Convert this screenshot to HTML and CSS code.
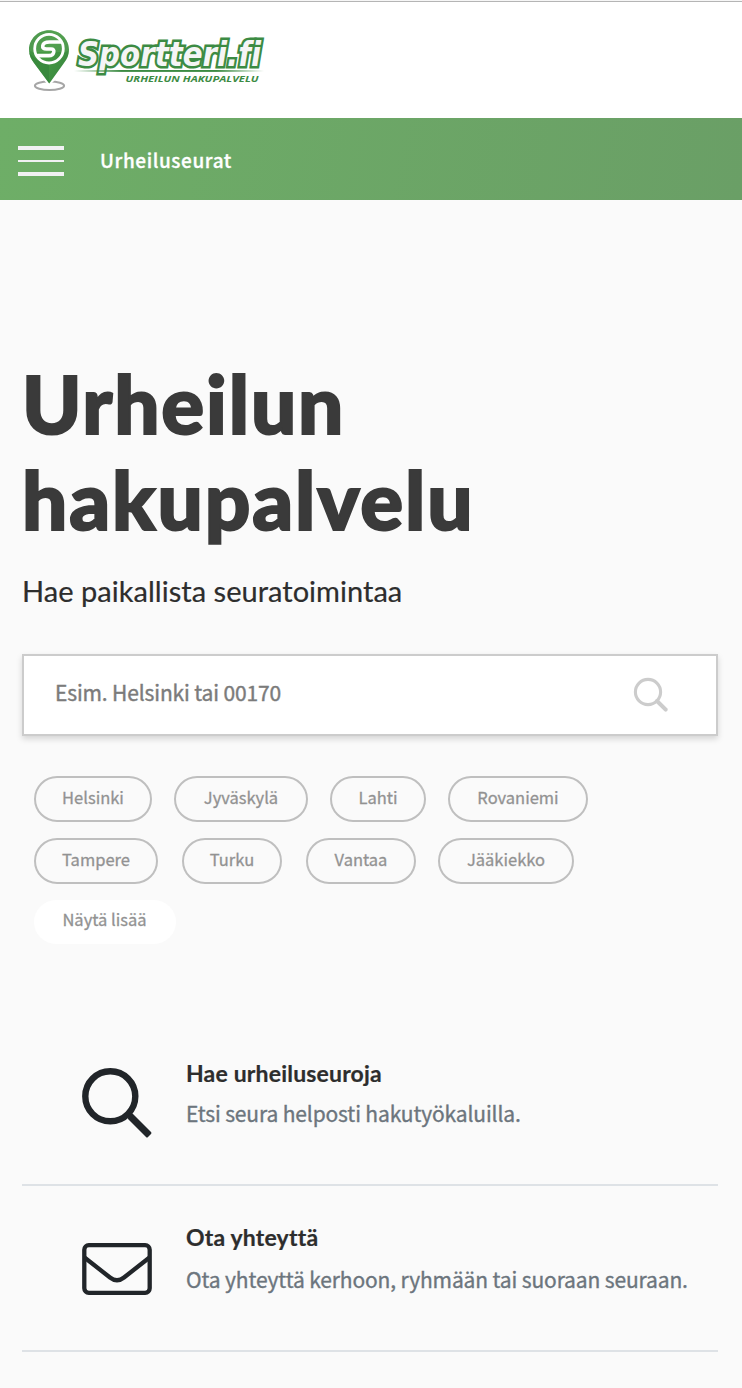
FILE: index.html
```html
<!DOCTYPE html>
<html lang="fi">
<head>
<meta charset="utf-8">
<title>Sportteri.fi</title>
<link rel="stylesheet" href="styles.css">
</head>
<body>
<header class="header">
  <svg class="logo" viewBox="0 0 250 80" role="img" aria-label="Sportteri.fi">
    <defs>
      <linearGradient id="pin" x1="0" y1="0" x2="1" y2="0.7">
        <stop offset="0" stop-color="#3d8a43"/><stop offset="0.5" stop-color="#459b43"/><stop offset="1" stop-color="#3a8740"/>
      </linearGradient>
      <linearGradient id="rule" x1="0" y1="0" x2="1" y2="0">
        <stop offset="0" stop-color="#3c8b43" stop-opacity="0"/><stop offset="0.25" stop-color="#3c8b43"/><stop offset="0.75" stop-color="#3c8b43"/><stop offset="1" stop-color="#3c8b43" stop-opacity="0"/>
      </linearGradient>
    </defs>
    <ellipse cx="29.500" cy="65.800" rx="14.600" ry="4.200" fill="none" stroke="#a6a6a6" stroke-width="2"/>
    <path d="M22 58 29 66 37 58Z" fill="#fff"/>
    <path d="M29 10.300C40 10.300 49 19 49 30C49 35 47 39 44 43L29.300 63.500L14 43C11 39 9 35 9 30C9 19 18 10.300 29 10.300Z" fill="url(#pin)"/>
    <path d="M29 42v21.300L14 43Q10 38 9.200 33L16 39Z" fill="#32803a" opacity=".6"/>
    <path d="M9 31C9 18 18 10.300 29 10.300S49 18 49 31l-4 1H13Z" fill="#7ab873" opacity=".25"/>
    <circle cx="29" cy="28.700" r="14.300" fill="none" stroke="#fff" stroke-width="2.800"/>
    <path d="M42 22H29.500Q23.500 22 22.800 25.500T26.500 29H31Q34.500 29 33.700 32.300T29 35.600H17" fill="none" stroke="#fff" stroke-width="3.600"/>
    <text class="wordmark" x="58" y="46" textLength="183" lengthAdjust="spacingAndGlyphs">Sportteri.fi</text>
    <rect x="54" y="50" width="190" height="1.900" fill="url(#rule)"/>
    <text class="tagline" x="105.500" y="62" textLength="133" lengthAdjust="spacingAndGlyphs">URHEILUN HAKUPALVELU</text>
  </svg>
</header>
<nav class="nav">
  <div class="burger"><span></span><span></span><span></span></div>
  <a class="nav-link">Urheiluseurat</a>
</nav>
<main class="main">
  <h1 class="title">Urheilun<br>hakupalvelu</h1>
  <p class="lead">Hae paikallista seuratoimintaa</p>
  <div class="search">
    <span class="placeholder">Esim. Helsinki tai 00170</span>
    <svg class="search-icon" viewBox="0 0 36 36"><circle cx="15" cy="15" r="12.600" fill="none" stroke="#ccc" stroke-width="3.100"/><path d="M24 24 32.700 32.700" stroke="#ccc" stroke-width="4" stroke-linecap="round"/></svg>
  </div>
  <div class="tags">
    <div class="row"><a class="tag t1">Helsinki</a><a class="tag t2">Jyväskylä</a><a class="tag t3">Lahti</a><a class="tag t4">Rovaniemi</a></div>
    <div class="row wide"><a class="tag t5">Tampere</a><a class="tag t6">Turku</a><a class="tag t7">Vantaa</a><a class="tag t8">Jääkiekko</a></div>
    <div class="row"><a class="tag more">Näytä lisää</a></div>
  </div>
  <section class="feature first">
    <svg class="icon" viewBox="0 0 70 70"><circle cx="28.300" cy="28.300" r="25" fill="none" stroke="#212529" stroke-width="6.400"/><path d="M46.500 45.500h4L69 64Q70 65 69 66L66 69Q65 70 64 69L46 51Z" fill="#212529"/></svg>
    <div class="copy"><h2>Hae urheiluseuroja</h2><p class="p1">Etsi seura helposti hakutyökaluilla.</p></div>
  </section>
  <section class="feature second">
    <svg class="icon" viewBox="0 0 70 70"><g fill="none" stroke="#212529" stroke-width="4.300"><rect x="2.300" y="11.200" width="65.400" height="47.600" rx="4.500"/><path d="M2.500 23.500 28 43.500Q35 49 42 43.500L67.500 23.500"/></g></svg>
    <div class="copy"><h2>Ota yhteyttä</h2><p class="p2">Ota yhteyttä kerhoon, ryhmään tai suoraan seuraan.</p></div>
  </section>
</main>
</body>
</html>
```
FILE: styles.css
```css
* { box-sizing: border-box; }
body { margin: 0; background: #fafafa; font-family: "Noto Sans CJK SC", sans-serif; color: #2d2d2d; }
h1, h2, p { margin: 0; }
.header { height: 118px; background: linear-gradient(#f6f6f6 1px, #b5b5b5 1px, #b5b5b5 2px, #fff 2px); padding: 20px 0 0 20px; }
.logo { width: 250px; height: 80px; display: block; overflow: visible; }
.wordmark { font: italic 700 33px "DejaVu Sans", sans-serif; font-variant-ligatures: none; fill: #f5f5f5; stroke: #3c8b43; stroke-width: 5.2px; paint-order: stroke; stroke-linejoin: miter; stroke-miterlimit: 3; }
.tagline { font: italic 700 9.500px "Open Sans", sans-serif; fill: #3c8b43; }
.nav { height: 82px; padding-left: 18px; display: flex; align-items: center; background: linear-gradient(100deg, #6eae67, #6a9f66); }
.burger { width: 46px; height: 30px; margin-top: 4px; display: flex; flex-direction: column; justify-content: space-between; }
.burger span { height: 4px; background: #f1f1f3; }
.burger span:nth-child(2) { height: 2px; }
.nav-link { margin: 2px 0 0 36px; color: #fff; font-size: 19px; font-weight: 500; line-height: 30px; letter-spacing: .6px; -webkit-text-stroke: .3px #fff; }
.main { padding: 155px 24px 0 22px; }
.title { font: 900 80px/96px Lato, sans-serif; color: #3a3a3a; letter-spacing: 1.850px; -webkit-text-stroke: 2px #3a3a3a; }
.lead { font: 400 29px/40px Lato, sans-serif; margin-top: 24px; letter-spacing: .03px; -webkit-text-stroke: .2px #2d2d2d; }
.search { margin-top: 43px; height: 82px; border: 2px solid #ccc; background: #fff; box-shadow: 0 3px 6px rgba(0,0,0,.15); padding: 0 47px 0 31px; display: flex; justify-content: space-between; align-items: center; }
.placeholder { color: #7b7b7b; font-size: 21px; line-height: 30px; margin-top: -6px; letter-spacing: -.14px; -webkit-text-stroke: .4px #7b7b7b; }
.search-icon { width: 36px; height: 36px; }
.tags { margin: 40px 0 0 12px; display: grid; gap: 16px; }
.row { display: flex; gap: 22px; }
.wide { gap: 24px; }
.tag { height: 46px; border: 2px solid #bfbfbf; border-radius: 23px; color: #929292; font-size: 16.500px; line-height: 39px; text-align: center; white-space: nowrap; -webkit-text-stroke: .3px #929292; }
.t1 { width: 118px; } .t2 { width: 134px; } .t3 { width: 96px; } .t4 { width: 140px; }
.t5 { width: 124px; } .t6 { width: 100px; } .t7 { width: 110px; } .t8 { width: 136px; margin-left: -2px; }
.more { width: 142px; height: 44px; border: 0; background: #fff; line-height: 38px; padding-right: 1px; }
.feature { display: flex; border-bottom: 2px solid #dee2e6; padding-left: 60px; }
.first { margin-top: 106px; height: 136px; padding-top: 18px; }
.second { height: 166px; padding-top: 48px; }
.icon { width: 70px; height: 70px; flex: none; }
.copy { margin-left: 34px; white-space: nowrap; }
.first .copy { margin-top: -11px; }
.second .copy { margin-top: -13px; }
.copy h2 { font: 700 23px/32px Lato, sans-serif; letter-spacing: .18px; -webkit-text-stroke: .2px #2d2d2d; }
.copy p { font-size: 21px; line-height: 32px; color: #6c757d; margin-top: 8px; letter-spacing: -.13px; -webkit-text-stroke: .35px #6c757d; }
.copy .p2 { margin-top: 10px; }
```
